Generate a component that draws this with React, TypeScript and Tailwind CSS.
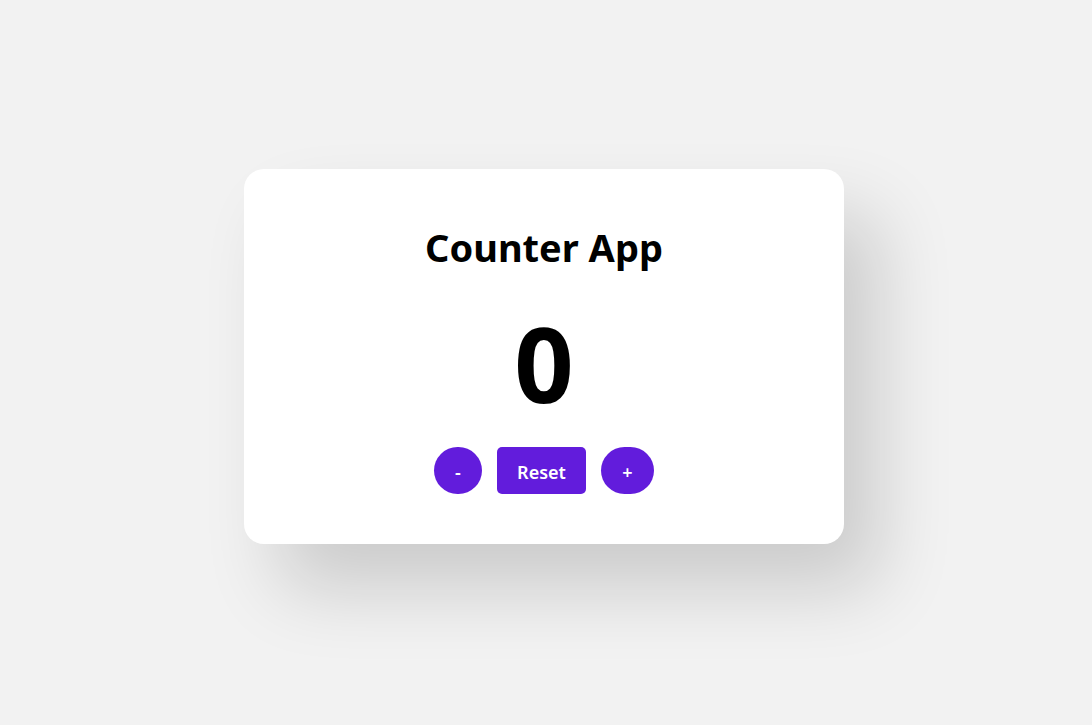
import { useState } from "react";

export default function App() {
    const [count, setCount] = useState(0);

    return (
        <div
            className="min-h-screen w-full bg-[#f2f2f2] flex items-center justify-center"
            style={{ fontFamily: '"Noto Sans", "Open Sans", sans-serif' }}
        >
            <div className="w-[600px] h-[375px] bg-white rounded-[20px] shadow-[35px_45px_75px_rgba(0,0,0,0.16)] flex flex-col items-center pt-[54px] -translate-y-[6px] -translate-x-[2px]">
                <h1 className="text-[38px] leading-[48px] font-bold text-black">Counter App</h1>

                <div className="mt-[40px] text-[104px] leading-[104px] font-bold text-black">{count}</div>

                <div className="mt-[32px] flex items-center gap-[15px]">
                    <button
                        onClick={() => setCount(count - 1)}
                        className="w-[48px] h-[47px] pt-[3px] rounded-full bg-[#621cdc] text-white text-[18px] font-semibold"
                    >
                        -
                    </button>
                    <button
                        onClick={() => setCount(0)}
                        className="w-[89px] h-[47px] pt-[3px] rounded-[5px] bg-[#621cdc] text-white text-[18px] font-semibold"
                    >
                        Reset
                    </button>
                    <button
                        onClick={() => setCount(count + 1)}
                        className="w-[53px] h-[47px] pt-[3px] rounded-full bg-[#621cdc] text-white text-[18px] font-semibold"
                    >
                        +
                    </button>
                </div>
            </div>
        </div>
    );
}
